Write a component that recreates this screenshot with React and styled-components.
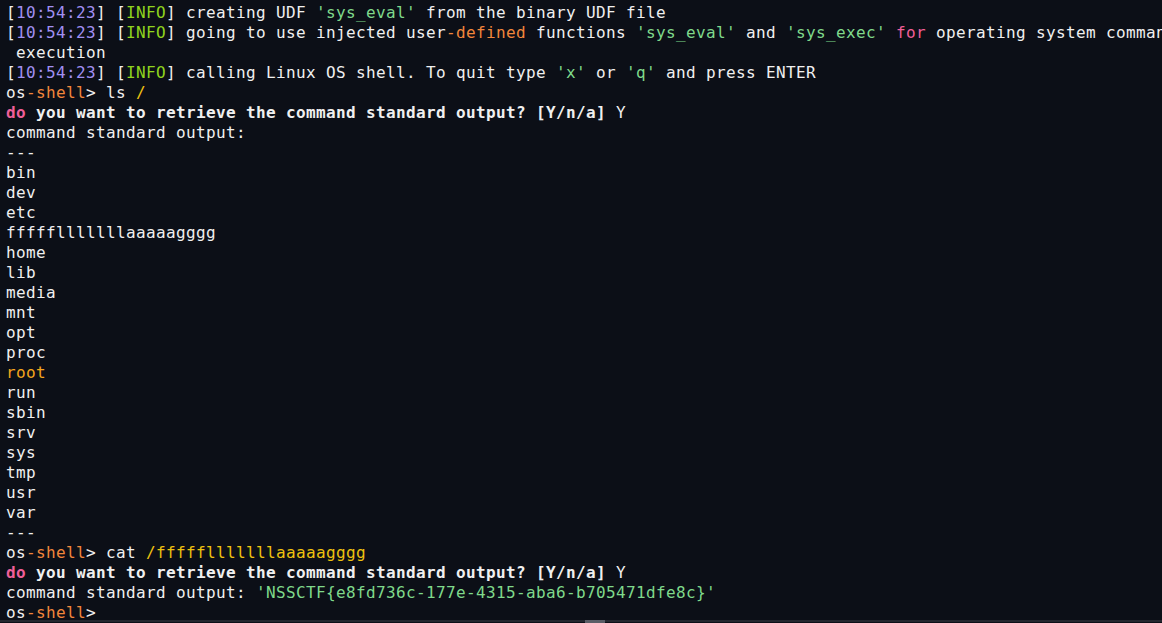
import React from "react";
import styled, { createGlobalStyle } from "styled-components";

const GlobalStyle = createGlobalStyle`
  html, body {
    margin: 0;
    padding: 0;
    background: #0c0f17;
    overflow: hidden;
  }
`;

const colors = {
  text: "#f0f0f0",
  time: "#a190f2",
  info: "#8fd41e",
  str: "#7fd98b",
  orange: "#f2863c",
  pink: "#ef5f98",
  yellow: "#eec20f",
  gold: "#f3a51d",
};

const Screen = styled.div`
  position: relative;
  width: 1162px;
  height: 623px;
  background: #0c0f17;
  overflow: hidden;
  box-sizing: border-box;
  padding: 3px 0 0 6px;
`;

const Line = styled.div`
  height: 20px;
  line-height: 20px;
  white-space: pre;
  font-family: "DejaVu Sans Mono", "Liberation Mono", monospace;
  font-size: 16px;
  letter-spacing: 0.367px;
  color: ${colors.text};
  font-weight: ${(p) => (p.$bold ? 700 : 400)};
`;

const C = styled.span`
  color: ${(p) => colors[p.$c] || colors.text};
  font-weight: ${(p) => (p.$normal ? 400 : "inherit")};
`;

const ScrollTrack = styled.div`
  position: absolute;
  left: 0;
  right: 0;
  bottom: 1px;
  height: 2px;
  background: #24272f;
`;

const ScrollThumb = styled.div`
  position: absolute;
  left: 585px;
  width: 20px;
  bottom: 0;
  height: 3px;
  background: #5a5d66;
`;

const Stamp = () => (
  <>
    [<C $c="time">10:54:23</C>] [<C $c="info">INFO</C>]{" "}
  </>
);

const Prompt = ({ children }) => (
  <Line>
    os<C $c="orange">-shell</C>&gt;{children}
  </Line>
);

const Question = () => (
  <Line $bold>
    <C $c="pink">do</C> you want to retrieve the command standard output? [Y/n/a]
    <C $normal> Y</C>
  </Line>
);

const dirs = [
  "bin",
  "dev",
  "etc",
  "ffffflllllllaaaaagggg",
  "home",
  "lib",
  "media",
  "mnt",
  "opt",
  "proc",
  "root",
  "run",
  "sbin",
  "srv",
  "sys",
  "tmp",
  "usr",
  "var",
];

export default function App() {
  return (
    <>
      <GlobalStyle />
      <Screen>
        <Line>
          <Stamp />
          creating UDF <C $c="str">'sys_eval'</C> from the binary UDF file
        </Line>
        <Line>
          <Stamp />
          going to use injected user<C $c="orange">-defined</C> functions{" "}
          <C $c="str">'sys_eval'</C> and <C $c="str">'sys_exec'</C>{" "}
          <C $c="pink">for</C> operating system command
        </Line>
        <Line> execution</Line>
        <Line>
          <Stamp />
          calling Linux OS shell. To quit type <C $c="str">'x'</C> or{" "}
          <C $c="str">'q'</C> and press ENTER
        </Line>
        <Prompt>
          {" "}ls <C $c="yellow">/</C>
        </Prompt>
        <Question />
        <Line>command standard output:</Line>
        <Line>---</Line>
        {dirs.map((d) => (
          <Line key={d}>
            {d === "root" ? <C $c="gold">{d}</C> : d}
          </Line>
        ))}
        <Line>---</Line>
        <Prompt>
          {" "}cat <C $c="yellow">/ffffflllllllaaaaagggg</C>
        </Prompt>
        <Question />
        <Line>
          command standard output:{" "}
          <C $c="str">'NSSCTF{"{"}e8fd736c-177e-4315-aba6-b705471dfe8c{"}"}'</C>
        </Line>
        <Prompt />
        <ScrollTrack />
        <ScrollThumb />
      </Screen>
    </>
  );
}
